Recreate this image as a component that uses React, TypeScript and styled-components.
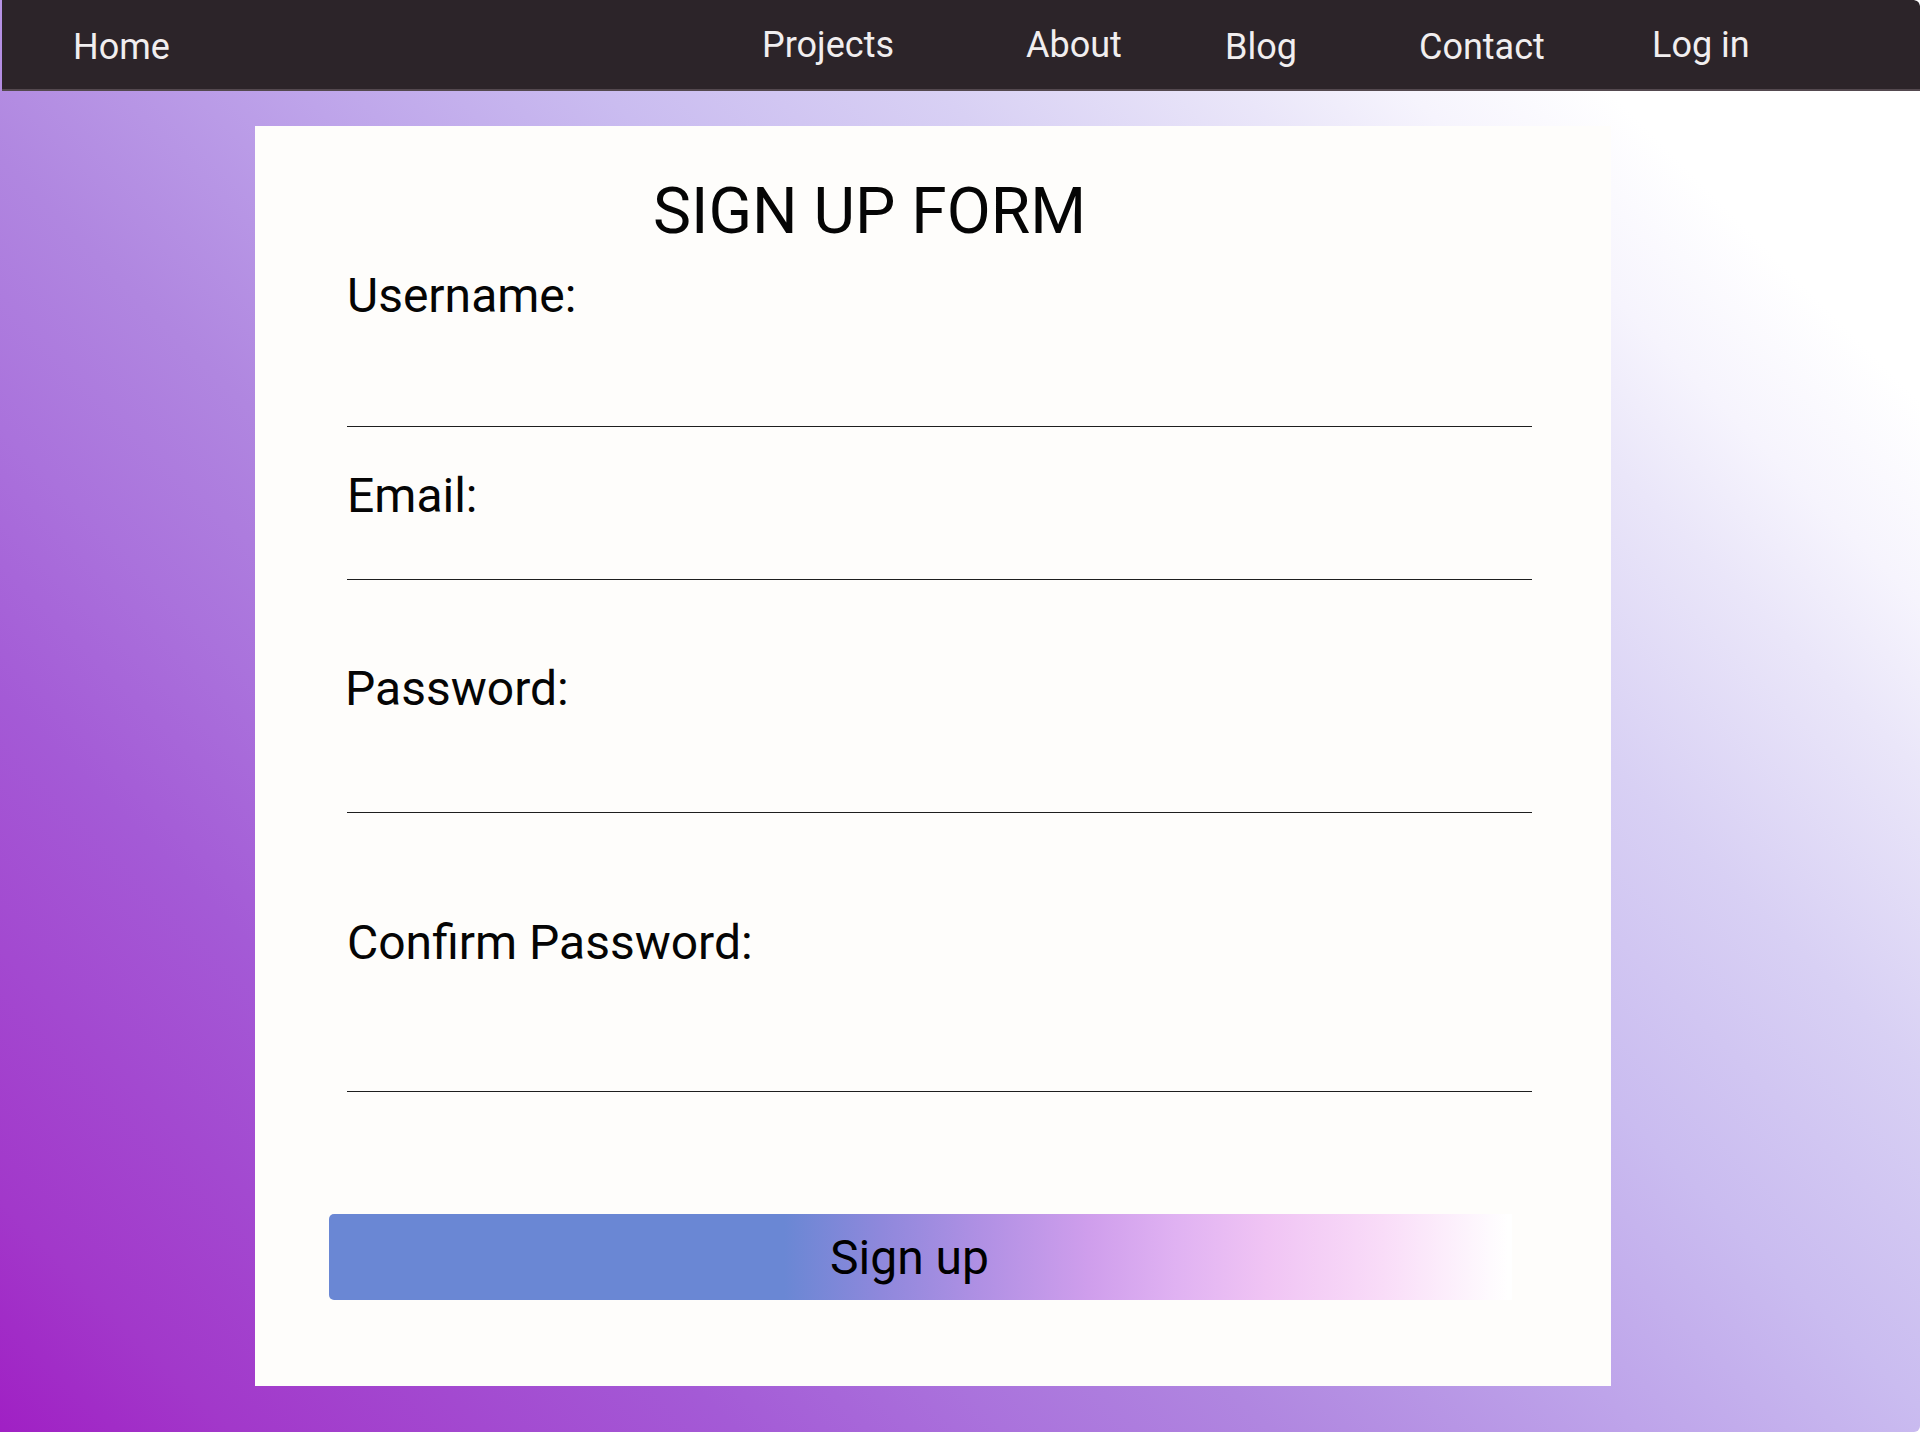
import styled, { createGlobalStyle } from 'styled-components';

const GlobalStyle = createGlobalStyle`
  html,
  body {
    margin: 0;
    padding: 0;
    background: #ffffff;
  }
  body {
    font-family: Roboto, 'Noto Sans', Arial, sans-serif;
  }
  * {
    box-sizing: border-box;
  }
`;

type NavItem = { label: string; lift?: boolean };

const navItems: NavItem[] = [
  { label: 'Home' },
  { label: 'Projects', lift: true },
  { label: 'About', lift: true },
  { label: 'Blog' },
  { label: 'Contact' },
  { label: 'Log in', lift: true },
];

type FieldType = {
  label: string;
  type: string;
  gap: number;
  height: number;
  indent?: number;
};

const fields: FieldType[] = [
  { label: 'Username:', type: 'text', gap: 18, height: 103 },
  { label: 'Email:', type: 'email', gap: 40, height: 56 },
  { label: 'Password:', type: 'password', gap: 80, height: 96, indent: -2 },
  { label: 'Confirm Password:', type: 'password', gap: 101, height: 121 },
];

export default function App() {
  return (
    <>
      <GlobalStyle />
      <Page>
        <NavBar>
          {navItems.map((item) => (
            <NavLink key={item.label} href="#" $lift={item.lift}>
              {item.label}
            </NavLink>
          ))}
        </NavBar>
        <Card>
          <Title>SIGN UP FORM</Title>
          <Form onSubmit={(e) => e.preventDefault()}>
            {fields.map((field) => (
              <Field key={field.label} $gap={field.gap}>
                <Label $indent={field.indent ?? 0}>{field.label}</Label>
                <Input type={field.type} $height={field.height} />
              </Field>
            ))}
            <SubmitButton type="submit">Sign up</SubmitButton>
          </Form>
        </Card>
      </Page>
    </>
  );
}

const Page = styled.div`
  width: 100%;
  min-height: 1432px;
  display: flex;
  flex-direction: column;
  overflow: hidden;
  border-radius: 0 6px 6px 0;
  background: linear-gradient(
    45deg,
    #a020c4 0%,
    #a238ca 7%,
    #a45ad6 22%,
    #aa72dc 30%,
    #b086e0 38%,
    #bea4ea 49%,
    #cabcf0 58%,
    #d8d0f4 68%,
    #eae6f9 77%,
    #f6f4fd 82%,
    #ffffff 88%
  );
`;

const NavBar = styled.nav`
  margin-left: 2px;
  height: 91px;
  display: grid;
  grid-template-columns: 689px 264px 199px 194px 233px auto;
  align-items: start;
  padding: 26px 0 0 71px;
  background: #2c2429;
  border-bottom: 2px solid #54494f;
  border-top-right-radius: 6px;
`;

const NavLink = styled.a<{ $lift?: boolean }>`
  font-size: 36px;
  line-height: normal;
  color: #f1eeef;
  text-decoration: none;
  white-space: nowrap;
  margin-top: ${({ $lift }) => ($lift ? '-2px' : '0')};
`;

const Card = styled.section`
  width: 1356px;
  height: 1260px;
  margin: 35px 0 46px 255px;
  padding: 48px 79px 86px 92px;
  background: #fefdfb;
`;

const Title = styled.h1`
  margin: 0 0 0 306px;
  font-size: 64px;
  font-weight: 400;
  line-height: normal;
  color: #050505;
`;

const Form = styled.form`
  display: flex;
  flex-direction: column;
`;

const Field = styled.div<{ $gap: number }>`
  display: flex;
  flex-direction: column;
  margin-top: ${({ $gap }) => $gap}px;
`;

const Label = styled.label<{ $indent: number }>`
  margin-left: ${({ $indent }) => $indent}px;
  font-size: 48px;
  line-height: normal;
  color: #050505;
`;

const Input = styled.input<{ $height: number }>`
  display: block;
  width: 100%;
  height: ${({ $height }) => $height}px;
  padding: 0;
  border: none;
  border-bottom: 1px solid #1e1e1e;
  background: transparent;
  font-family: inherit;
  font-size: 36px;
  outline: none;
`;

const SubmitButton = styled.button`
  margin: 122px 0 0 -18px;
  width: 1183px;
  height: 86px;
  padding: 0 22px 0 0;
  border: none;
  border-radius: 5px 0 0 5px;
  font-family: inherit;
  font-size: 48px;
  line-height: normal;
  color: #000000;
  cursor: pointer;
  background: linear-gradient(
    to right,
    #6a87d4 0%,
    #6a87d4 38.5%,
    #8f88dc 46.8%,
    #b090e4 55.1%,
    #cf9eec 64.2%,
    #e0b2f2 71.7%,
    #f0c4f4 79.3%,
    #f9dcf8 89.1%,
    #ffffff 99.7%
  );
`;
